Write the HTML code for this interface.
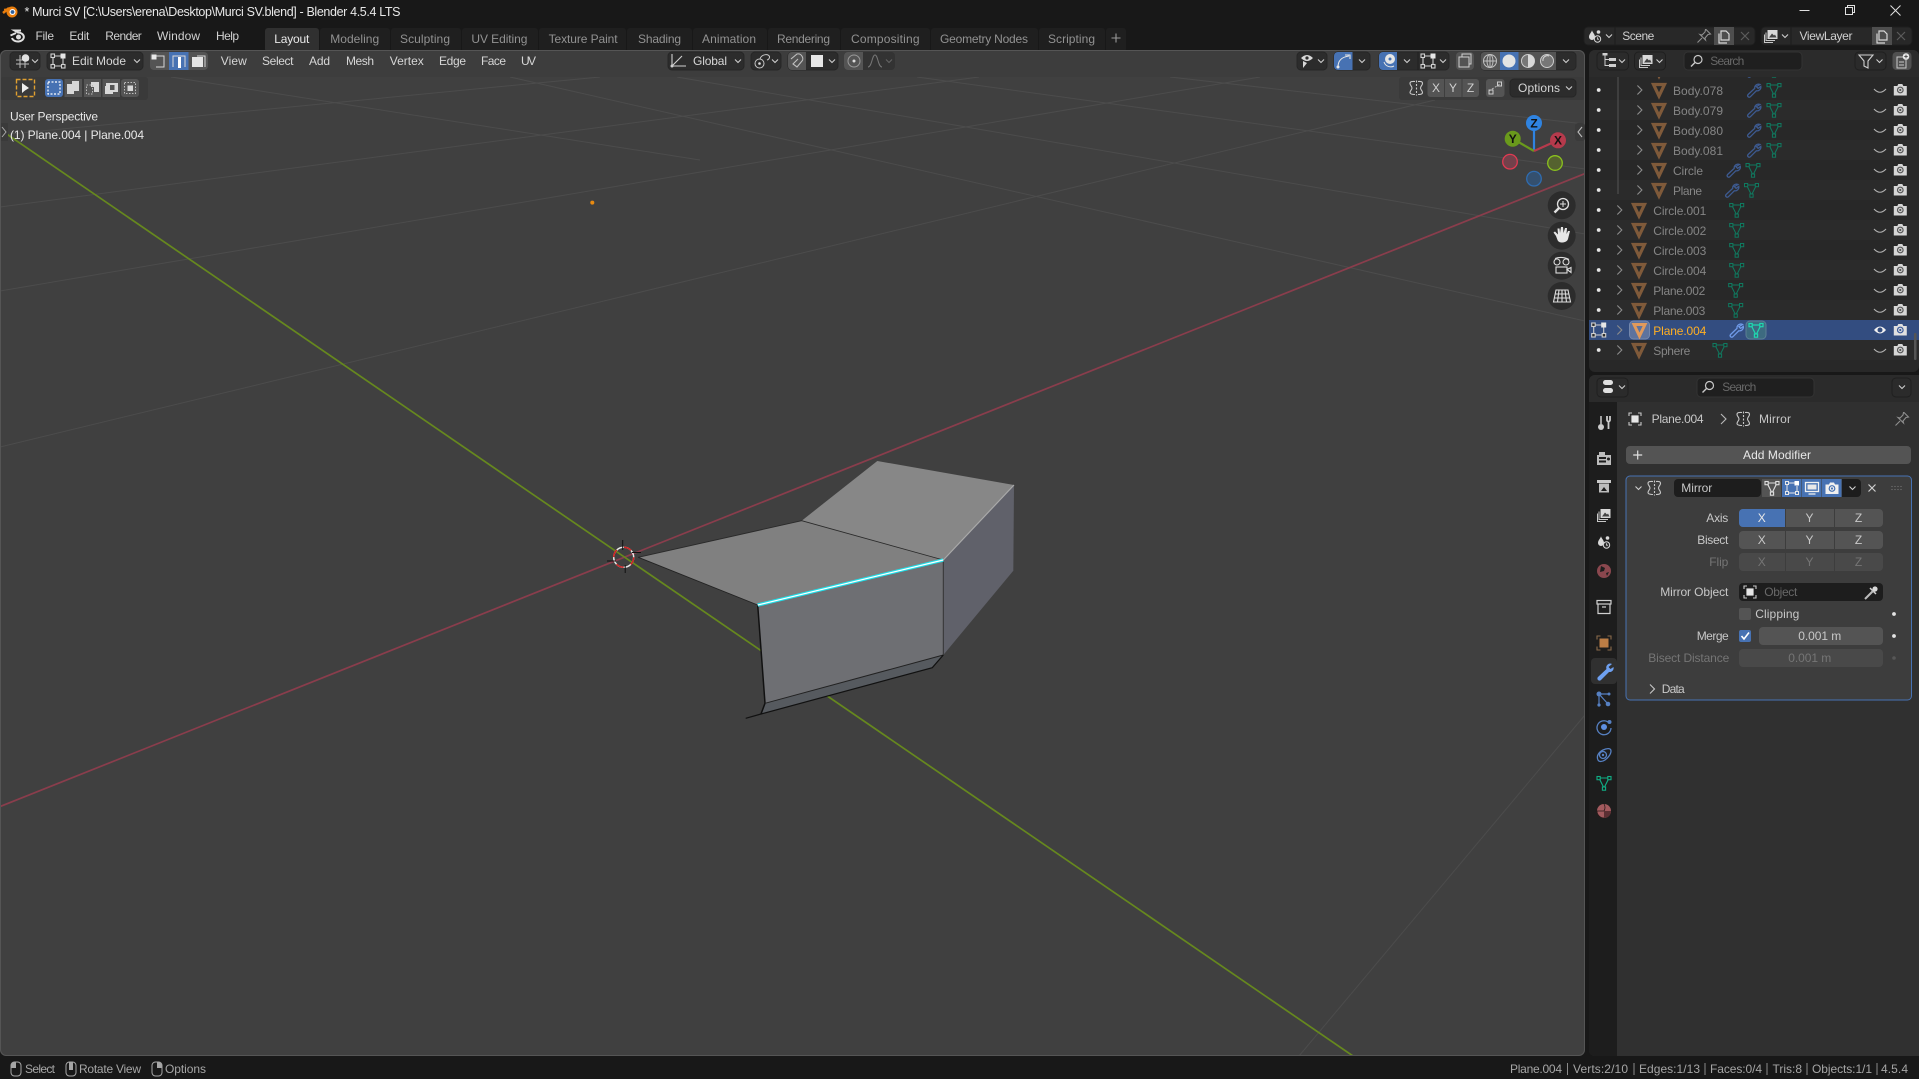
<!DOCTYPE html>
<html><head><meta charset="utf-8"><title>Blender</title>
<style>
html,body{margin:0;padding:0;background:#181818;overflow:hidden}
svg{display:block}
text{font-family:"Liberation Sans",sans-serif;font-size:12px;fill:#d0d0d0;white-space:pre}
.tab{fill:#929292}.hd{fill:#d6d6d6}.ol{fill:#858585}.lb{fill:#c8c8c8}.dim{fill:#757575}.st{fill:#a6a6a6}.ph{fill:#686868}.w{fill:#e8e8e8}
.c{text-anchor:middle}
</style></head><body>
<svg width="1919" height="1079" viewBox="0 0 1919 1079" xmlns="http://www.w3.org/2000/svg">
<defs>
<clipPath id="vp"><rect x="0" y="50" width="1585" height="1006" rx="6"/></clipPath>
<clipPath id="ol"><rect x="1589" y="50" width="330" height="322" rx="6"/></clipPath>
<g id="tri"><path d="M-5.5-5.5H5.5L0 6Z" fill="none" stroke="#7f5a3a" stroke-width="3.200" stroke-linejoin="miter"/></g>
<g id="msh" fill="none" stroke="#0f7a60" stroke-width="1"><path d="M-5-5H5L0 5Z"/><rect x="-7" y="-6.500" width="3.200" height="3.200" fill="#282828"/><rect x="3.800" y="-6.500" width="3.200" height="3.200" fill="#282828"/><rect x="-1.600" y="4" width="3.200" height="3.200" fill="#282828"/></g>
<g id="wr"><path d="M6.500-5.500A3.800 3.800 0 0 0 1.200-1.600L-5.500 4.600A1.600 1.600 0 0 0-3.200 6.800L2.800.8A3.800 3.800 0 0 0 7.300-3.600L4.600-1.600 2.900-3.400Z" fill="none" stroke="#3d5a90" stroke-width="1.300"/></g>
<g id="ec"><path d="M-6-1Q0 5.500 6-1" fill="none" stroke="#b0b0b0" stroke-width="1.100"/></g>
<g id="cam"><path d="M-6.500-4H-3L-2-6H2L3-4H6.500V5.500H-6.500Z" fill="#d6d6d6"/><circle r="3.400" fill="#555"/><circle r="2.200" fill="#d6d6d6"/><circle r="1.100" fill="#555"/></g>
<g id="chd"><path d="M-3-1.500L0 1.500 3-1.500" fill="none" stroke="#cfcfcf" stroke-width="1.100"/></g>
<g id="chr"><path d="M-2-4.500L2.500 0-2 4.500" fill="none" stroke="#8c8c8c" stroke-width="1.100"/></g>
<g id="dot"><circle r="1.900" fill="#e4e4e4"/></g>
<g id="mir" fill="none" stroke="#c8c8c8" stroke-width="1.100"><path d="M-1-6.500C-3-6.500-6-7-6-4.500-6-2.500-4-2-4 0S-6 2.500-6 4.500-3 6.500-1 6.500"/><path d="M2-6.500C4-6.500 6.500-7 6.500-4.500 6.500-2.500 4.500-2 4.500 0S6.500 2.500 6.500 4.500 4 6.500 2 6.500"/><path d="M.5-7.500V7.500" stroke-dasharray="2 1.500"/></g>
<g id="mesel" fill="none" stroke="#d0d0d0" stroke-width="1.100"><path d="M-5-5H4M-5-5V5M-5 5H5M5-3V5"/><rect x="-7" y="-7" width="3.500" height="3.500" fill="#2b2b2b"/><rect x="-7" y="3.500" width="3.500" height="3.500" fill="#2b2b2b"/><rect x="3.500" y="3.500" width="3.500" height="3.500" fill="#2b2b2b"/><rect x="2.500" y="-7.500" width="5" height="5" fill="#e6e6e6" stroke="none"/></g>
<g id="objbox"><rect x="-3.600" y="-3.600" width="7.200" height="7.200" fill="#e6e6e6"/><path d="M-6-3V-6H-3M3-6H6V-3M6 3V6H3M-3 6H-6V3" fill="none" stroke="#c8c8c8" stroke-width="1.100"/></g>
<g id="search"><circle cx="1.500" cy="-1.500" r="4" fill="none" stroke="#c8c8c8" stroke-width="1.200"/><path d="M-1.500 1.500L-5.500 5.500" stroke="#c8c8c8" stroke-width="1.400"/></g>
<g id="vl"><rect x="-3.500" y="-6" width="10" height="9" fill="#d8d8d8"/><path d="M-2 1.500L1-2.500 3-.5 4-1.500 5.500 1.500Z" fill="#444"/><path d="M-5-3.500V4.500H4M-6.500-1.500V6.500H2" fill="none" stroke="#c8c8c8" stroke-width="1"/></g>
<g id="copy"><path d="M-3-5H2L5-2V4H-3Z" fill="none" stroke="#d8d8d8" stroke-width="1.200"/><path d="M-5-2.500V7H3" fill="none" stroke="#d8d8d8" stroke-width="1.200"/></g>
<g id="pin"><path d="M2-6.500L6.500-2 4-1.500 1 2 1.500 4-4-1.500-2-1 1-4 1.500-6.500ZM-2 2L-6.500 6.500" fill="none" stroke="#8f8f8f" stroke-width="1.100"/></g>
<g id="x"><path d="M-4-4L4 4M4-4L-4 4" stroke="#5c5c5c" stroke-width="1.200"/></g>
<g id="sceneic"><path d="M-3-6C-3-4-6-2-6 1A3 3 0 0 0 0 1C0-2-3-4-3-6Z" fill="#d8d8d8"/><circle cx="3.500" cy="-4" r="1.800" fill="#d8d8d8"/><circle cx="2.500" cy="3" r="3.200" fill="#2b2b2b" stroke="#d8d8d8" stroke-width="1"/><path d="M2.500 1.200V3.200H4" stroke="#d8d8d8" fill="none" stroke-width=".8"/></g>
<g id="mouse"><rect x="-5" y="-7" width="10" height="14" rx="3.500" fill="none" stroke="#a6a6a6" stroke-width="1"/></g>
</defs>

<rect width="1919" height="1079" fill="#181818"/>

<!-- title bar -->
<circle cx="12" cy="12" r="5.500" fill="#e87d0d"/><path d="M3 13L9 8" stroke="#e87d0d" stroke-width="2.500"/><path d="M4 9.500L9 9" stroke="#e87d0d" stroke-width="1.600"/><circle cx="12.500" cy="12" r="3" fill="#fff"/><circle cx="12.500" cy="12" r="1.900" fill="#2d5f9c"/>
<text x="24.500" y="16" textLength="376" class="w" style="font-size:12.500px">* Murci SV [C:\Users\erena\Desktop\Murci SV.blend] - Blender 4.5.4 LTS</text>
<path d="M1799.500 10.500H1809.500" stroke="#e0e0e0" stroke-width="1"/>
<path d="M1845.500 7.500H1852.500V14.500H1845.500ZM1847.500 7.500V5.500H1854.500V12.500H1852.500" fill="none" stroke="#e0e0e0" stroke-width="1"/>
<path d="M1890.500 5.500L1900.500 15.500M1900.500 5.500L1890.500 15.500" stroke="#e0e0e0" stroke-width="1"/>

<!-- menu -->
<g transform="translate(18,36)"><path d="M-6 2A6 4.500 0 1 0 0-3.500L-3.500-5.500H3" fill="none" stroke="#e0e0e0" stroke-width="2"/><circle cx="0.500" cy="1" r="2.500" fill="#e0e0e0"/><path d="M-7.500-.5L-2-3" stroke="#e0e0e0" stroke-width="1.800"/></g>
<text x="35.500" y="40" textLength="18.500">File</text>
<text x="69.400" y="40" textLength="20">Edit</text>
<text x="105.300" y="40" textLength="36.500">Render</text>
<text x="157" y="40" textLength="43">Window</text>
<text x="216" y="40" textLength="23">Help</text>

<!-- workspace tabs -->
<g fill="#1f1f1f">
<rect x="320" y="28" width="70" height="24" rx="3"/><rect x="391" y="28" width="70" height="24" rx="3"/><rect x="462" y="28" width="76" height="24" rx="3"/><rect x="539" y="28" width="87" height="24" rx="3"/><rect x="627" y="28" width="65" height="24" rx="3"/><rect x="693" y="28" width="74" height="24" rx="3"/><rect x="768" y="28" width="72" height="24" rx="3"/><rect x="841" y="28" width="89" height="24" rx="3"/><rect x="931" y="28" width="107" height="24" rx="3"/><rect x="1039" y="28" width="66" height="24" rx="3"/><rect x="1106" y="28" width="20" height="24" rx="3"/>
</g>
<rect x="265" y="28" width="54" height="24" rx="3" fill="#303030"/>
<text x="274.300" y="43" textLength="35" class="w">Layout</text>
<text x="330.200" y="43" textLength="49" class="tab">Modeling</text>
<text x="400" y="43" textLength="50" class="tab">Sculpting</text>
<text x="471.400" y="43" textLength="56" class="tab">UV Editing</text>
<text x="548.600" y="43" textLength="69" class="tab">Texture Paint</text>
<text x="638" y="43" textLength="43" class="tab">Shading</text>
<text x="702" y="43" textLength="54" class="tab">Animation</text>
<text x="777" y="43" textLength="53" class="tab">Rendering</text>
<text x="851" y="43" textLength="68.500" class="tab">Compositing</text>
<text x="940" y="43" textLength="88" class="tab">Geometry Nodes</text>
<text x="1048" y="43" textLength="47" class="tab">Scripting</text>
<path d="M1116 42.500V33.500M1111.500 38H1120.500" stroke="#9a9a9a" stroke-width="1.100"/>

<!-- scene / view layer -->
<rect x="1584" y="27" width="171" height="18" rx="4" fill="#282828" stroke="#1e1e1e"/>
<rect x="1761" y="27" width="151" height="18" rx="4" fill="#282828" stroke="#1e1e1e"/>
<path d="M1615 27V45M1791 27V45" stroke="#1c1c1c"/>
<use href="#sceneic" x="1595" y="36"/><use href="#chd" x="1609" y="36"/>
<text x="1622.300" y="40" textLength="32">Scene</text>
<use href="#pin" x="1704" y="36"/>
<rect x="1714" y="27" width="20" height="18" fill="#4e4e4e"/><use href="#copy" x="1724" y="36"/><use href="#x" x="1745" y="36"/>
<use href="#vl" x="1771" y="36"/><use href="#chd" x="1785" y="36"/>
<text x="1799.500" y="40" textLength="53">ViewLayer</text>
<rect x="1872" y="27" width="20" height="18" fill="#4e4e4e"/><use href="#copy" x="1882" y="36"/><use href="#x" x="1901" y="36"/>

<!-- 3D viewport -->
<g clip-path="url(#vp)">
<rect x="0" y="50" width="1585" height="1006" fill="#404040"/>
<g stroke="#4c4c4c" stroke-width="1" fill="none">
<path d="M677 77L1585 234"/><path d="M917 77L1585 169"/><path d="M1170 77L1585 124"/><path d="M510 77L1585 321"/><path d="M171 77L700 160"/>
<path d="M0 291L1260 77"/><path d="M0 207L979 77"/><path d="M0 447L1435 100"/><path d="M0 135L600 77"/>
<path d="M1299 1056L1585 715"/>
</g>
<path d="M0 806.600L1585 173.600" stroke="#8a3d4c" stroke-width="1.700"/>
<path d="M0 129.500L1353 1056" stroke="#66881e" stroke-width="1.700"/>
<!-- mesh -->
<path d="M877.300 461L1014 485L943.300 560L801.700 520.700Z" fill="#878787"/>
<path d="M801.700 520.700L943.300 560L757.700 605L638.300 557.300Z" fill="#808080"/>
<path d="M757.700 605L943.300 560V655L765 703.300Z" fill="#6e6f73"/>
<path d="M943.300 560L1014 485L1013.300 570.700L943.300 655Z" fill="#60616a"/>
<path d="M765 703.300L943.300 655L932.300 667.700L761 714Z" fill="#565a5f"/>
<g fill="none" stroke="#111" stroke-width="1">
<path d="M638.300 557.300L801.700 520.700M801.700 520.700L943.300 560" stroke="#2a2a2a" stroke-width=".9"/><path d="M638.300 557.300L757.700 605" stroke="#222" stroke-width=".9"/><path d="M757.700 605L765 703.300L761 714" stroke-width="1.500"/><path d="M765 703.300L943.300 655" stroke="#222"/><path d="M745.700 718.300L761 714L932.300 667.700L943.300 655" stroke-width="1.200"/>
<path d="M943.300 560V655" stroke="#333"/>
</g>
<path d="M943.300 560L1014 485" stroke="#a9a9a9" stroke-width="1.200"/>
<path d="M757.700 605L943.300 560" stroke="#1fe0ea" stroke-width="3.400"/>
<path d="M757.700 605L943.300 560" stroke="#fff" stroke-width="1.200"/>
<!-- cursor -->
<circle cx="623.700" cy="557.300" r="10" fill="none" stroke="#e8e8e8" stroke-width="1.500"/>
<circle cx="623.700" cy="557.300" r="10" fill="none" stroke="#d02020" stroke-width="1.500" stroke-dasharray="7.850 7.850"/>
<path d="M622.700 540V550M625.200 565V573M607 561H616M632 552.500H641" stroke="#111" stroke-width="1"/>
<circle cx="592.300" cy="202.600" r="2" fill="#e88a10"/>
<!-- header -->
<rect x="0" y="50" width="1585" height="27" fill="#3d3d3d"/>
<rect x="0" y="77" width="148" height="23" rx="3" fill="#3a3a3a"/>
<rect x="1399" y="77" width="186" height="23" rx="3" fill="#3a3a3a"/>
<text x="10" y="120.500" textLength="88" class="w">User Perspective</text>
<text x="10" y="139" textLength="134" class="w">(1) Plane.004 | Plane.004</text>
<rect x="0" y="123" width="8" height="18" fill="#3a3a3a"/><path d="M2 127L6 132 2 137" fill="none" stroke="#aaa" stroke-width="1"/>
</g>
<rect x="0.500" y="50.500" width="1584" height="1005" rx="6" fill="none" stroke="#555" stroke-width="1"/>

<!-- header widgets -->
<rect x="10" y="52" width="30" height="18" rx="4" fill="#2c2c2c" stroke="#262626"/>
<g transform="translate(23,61)"><path d="M-7 3H6M-7-1H6M-3-6V7M2-6V7" stroke="#bbb" stroke-width="1" fill="none"/><circle cx="2.500" cy="-3" r="3.800" fill="#e0e0e0"/></g><use href="#chd" x="35" y="61"/>
<rect x="47" y="52" width="96" height="18" rx="4" fill="#2c2c2c" stroke="#262626"/>
<use href="#mesel" x="58" y="61"/>
<text x="72" y="65" textLength="54" class="hd">Edit Mode</text><use href="#chd" x="137" y="61"/>
<rect x="150" y="52" width="58" height="18" rx="4" fill="#545454"/>
<rect x="169" y="52" width="19.500" height="18" fill="#4772b3"/>
<g fill="none" stroke="#d8d8d8" stroke-width="1"><path d="M154 56H164V67H156"/><path d="M173 67V56H185V67"/><path d="M197 56H205V67"/></g>
<rect x="151.500" y="54.500" width="5" height="5" fill="#e8e8e8"/><rect x="178" y="57" width="3" height="11" fill="#fff"/><rect x="192" y="57" width="11" height="10" fill="#e6e6e6"/>
<text x="220.800" y="65" textLength="26" class="hd">View</text>
<text x="262" y="65" textLength="31.500" class="hd">Select</text>
<text x="309" y="65" textLength="21" class="hd">Add</text>
<text x="346" y="65" textLength="28" class="hd">Mesh</text>
<text x="389.800" y="65" textLength="34" class="hd">Vertex</text>
<text x="439" y="65" textLength="27" class="hd">Edge</text>
<text x="481" y="65" textLength="25" class="hd">Face</text>
<text x="521" y="65" textLength="15" class="hd">UV</text>

<rect x="16.500" y="79.500" width="18" height="17" fill="none" stroke="#e0a030" stroke-width="1.400" stroke-dasharray="4 2"/>
<path d="M22 83V93L25 90.500 29 88Z" fill="#eee"/>
<g fill="#545454"><rect x="64.500" y="79" width="17.500" height="18"/><rect x="84" y="79" width="17" height="18"/><rect x="102.500" y="79" width="17.500" height="18"/><rect x="121" y="79" width="18" height="18" rx="3"/></g>
<rect x="45" y="79" width="18" height="18" rx="3" fill="#4772b3"/>
<rect x="48" y="82" width="12" height="12" fill="none" stroke="#fff" stroke-width="1.200" stroke-dasharray="2 1.500"/>
<path d="M67 84H72V81H79V91H74V94H67Z" fill="#d8d8d8"/>
<path d="M91 82H99V92H94V87H91Z" fill="#d8d8d8"/><rect x="86.500" y="85" width="6" height="9" fill="none" stroke="#bbb" stroke-dasharray="1.500 1.500"/>
<path d="M106 83H118V92H113V94H105V86H106Z" fill="#d8d8d8"/><rect x="110" y="85" width="4.500" height="5" fill="#545454"/>
<rect x="124.500" y="82.500" width="11" height="11" fill="none" stroke="#c0c0c0" stroke-dasharray="1.500 1.500"/><rect x="127.500" y="85.500" width="5.500" height="5.500" fill="#d8d8d8"/>

<!-- transform widgets -->
<rect x="668" y="52" width="76" height="18" rx="4" fill="#2c2c2c" stroke="#262626"/>
<path d="M672 54V66H686M672 66L682 56" fill="none" stroke="#d0d0d0" stroke-width="1.100"/><circle cx="672" cy="66" r="1.500" fill="#d0d0d0"/>
<text x="693" y="65" textLength="34" class="hd">Global</text><use href="#chd" x="738" y="61"/>
<rect x="751" y="52" width="30" height="18" rx="4" fill="#2c2c2c" stroke="#262626"/>
<g fill="none" stroke="#c8c8c8" stroke-width="1"><circle cx="759.500" cy="63.500" r="4.500"/><path d="M760 59C761 54 770 53 769.500 57.500 769 59.500 767 60 767 60"/></g><circle cx="759.500" cy="63.500" r="1.300" fill="#e0e0e0"/><use href="#chd" x="775" y="61"/>
<rect x="788" y="52" width="50" height="18" rx="4" fill="#2c2c2c" stroke="#262626"/>
<path d="M788 56a4 4 0 0 1 4-4H806V70H792a4 4 0 0 1-4-4Z" fill="#545454"/>
<path d="M791 59L797 54C802 53 804 59 802 61L797 67 793 64 798 59" fill="none" stroke="#c0c0c0" stroke-width="1.100"/>
<rect x="811" y="55" width="12" height="12" fill="#e6e6e6"/><use href="#chd" x="832" y="61"/>
<rect x="844" y="52" width="51" height="18" rx="4" fill="#333"/>
<path d="M844 56a4 4 0 0 1 4-4H863V70H848a4 4 0 0 1-4-4Z" fill="#545454"/>
<circle cx="854" cy="61" r="6" fill="none" stroke="#9a9a9a"/><circle cx="854" cy="61" r="1.500" fill="#ddd"/>
<path d="M868 67C872 67 872 55 875 55S878 67 882 67" fill="none" stroke="#777" stroke-width="1"/>
<path d="M886 59.500L889 62.500 892 59.500" fill="none" stroke="#666" stroke-width="1"/>

<!-- right header widgets -->
<rect x="1297" y="52" width="30" height="18" rx="4" fill="#2c2c2c" stroke="#262626"/>
<path d="M1301 58Q1307 52 1313 58 1307 64 1301 58ZM1303 61L1303 68 1307 63" fill="#d8d8d8"/><circle cx="1307" cy="58" r="1.600" fill="#2c2c2c"/><use href="#chd" x="1321" y="61"/>
<rect x="1334" y="52" width="36" height="18" rx="4" fill="#2c2c2c" stroke="#262626"/>
<path d="M1334 56a4 4 0 0 1 4-4H1352.500V70H1338a4 4 0 0 1-4-4Z" fill="#4772b3"/>
<path d="M1338 67C1338 60 1342 57 1349 56M1345 55H1350V59" fill="none" stroke="#e6e6e6" stroke-width="1.100"/><circle cx="1338" cy="67" r="1.500" fill="#e6e6e6"/><use href="#chd" x="1362" y="61"/>
<rect x="1379" y="52" width="70" height="18" rx="4" fill="#2c2c2c" stroke="#262626"/>
<path d="M1379 56a4 4 0 0 1 4-4H1397V70H1383a4 4 0 0 1-4-4Z" fill="#4772b3"/>
<circle cx="1390" cy="59" r="5" fill="#e6e6e6"/><path d="M1384 62A7 7 0 0 0 1394 66" fill="none" stroke="#e6e6e6"/><circle cx="1390" cy="59" r="1.500" fill="#4772b3"/><use href="#chd" x="1407" y="61"/>
<path d="M1418 52V70" stroke="#1f1f1f"/><use href="#mesel" x="1428" y="61"/><use href="#chd" x="1443" y="61"/>
<rect x="1456" y="52" width="18" height="18" rx="4" fill="#545454"/>
<path d="M1459 57H1469V67H1459ZM1462 57V54H1471V64H1469" fill="none" stroke="#d0d0d0" stroke-width="1"/>
<rect x="1480.500" y="52" width="95.500" height="18" rx="4" fill="#2c2c2c" stroke="#262626"/>
<path d="M1480.500 56a4 4 0 0 1 4-4H1556V70H1484.500a4 4 0 0 1-4-4Z" fill="#545454"/>
<rect x="1500" y="52" width="18.500" height="18" fill="#4772b3"/>
<g fill="none" stroke="#c0c0c0"><circle cx="1490" cy="61" r="6.500"/><path d="M1483.500 61H1496.500M1490 54.500V67.500"/><ellipse cx="1490" cy="61" rx="3" ry="6.500"/></g>
<circle cx="1509" cy="61" r="6.500" fill="#e4e4e4"/>
<circle cx="1528" cy="61" r="6.500" fill="#777" stroke="#ccc"/><path d="M1528 54.500A6.500 6.500 0 0 1 1528 67.500Z" fill="#d8d8d8"/>
<circle cx="1547" cy="61" r="6.500" fill="#777" stroke="#ccc"/><path d="M1543 61A4.500 4.500 0 0 1 1549 56" fill="none" stroke="#ddd"/>
<use href="#chd" x="1566" y="61"/>

<use href="#mir" x="1416" y="88"/>
<rect x="1427.500" y="79" width="51.500" height="18" rx="3" fill="#545454"/>
<path d="M1444.500 79V97M1462 79V97" stroke="#3e3e3e"/>
<text x="1436" y="92" class="c">X</text><text x="1453" y="92" class="c">Y</text><text x="1470.500" y="92" class="c">Z</text>
<rect x="1486" y="79" width="18.500" height="18" rx="3" fill="#545454"/>
<path d="M1489 91L1500 84" stroke="#bbb" stroke-dasharray="2 1.500"/><rect x="1489" y="90" width="4" height="4" fill="none" stroke="#ccc"/><rect x="1497.500" y="82" width="4" height="4" fill="none" stroke="#ccc"/>
<rect x="1510" y="79" width="66" height="18" rx="4" fill="#2c2c2c" stroke="#262626"/>
<text x="1518" y="92" textLength="42" class="hd">Options</text><use href="#chd" x="1569" y="88"/>

<!-- gizmo -->
<g stroke-width="2.200"><path d="M1534 151L1534 123" stroke="#2f83e0"/><path d="M1534 151L1512.700 138.700" stroke="#6a9a1c"/><path d="M1534 151L1558 140.300" stroke="#b63a4c"/></g>
<circle cx="1534" cy="123" r="8" fill="#2f83e0"/><circle cx="1512.700" cy="138.700" r="8" fill="#6a9a1c"/><circle cx="1558" cy="140.300" r="8" fill="#b63a4c"/>
<text x="1534" y="127.500" class="c" style="fill:#111;font-weight:bold;font-size:12px">Z</text>
<text x="1512.700" y="143" class="c" style="fill:#111;font-weight:bold;font-size:12px">Y</text>
<text x="1558" y="144.500" class="c" style="fill:#111;font-weight:bold;font-size:12px">X</text>
<circle cx="1510" cy="161.700" r="7.300" fill="#73414b" stroke="#e23a52" stroke-width="1.300"/>
<circle cx="1555" cy="163" r="7.300" fill="#55622f" stroke="#8bc21e" stroke-width="1.300"/>
<circle cx="1534" cy="178.700" r="7.300" fill="#34506f" stroke="#2f6cb0" stroke-width="1.300"/>
<rect x="1575" y="123" width="10" height="18" rx="3" fill="#3a3a3a"/><path d="M1582 127L1578 132 1582 137" fill="none" stroke="#bbb" stroke-width="1.100"/>
<g fill="#2c2c2c"><circle cx="1561.700" cy="205.300" r="14"/><circle cx="1561.700" cy="235.700" r="14"/><circle cx="1561.700" cy="265.700" r="14"/><circle cx="1561.700" cy="296" r="14"/></g>
<circle cx="1563" cy="204" r="5.500" fill="none" stroke="#e0e0e0" stroke-width="1.300"/><path d="M1559 208L1554.500 212.500" stroke="#e0e0e0" stroke-width="2.400"/><path d="M1560 204H1566M1563 201V207" stroke="#e0e0e0" stroke-width="1"/>
<path d="M1556 236L1553.500 232.500 1555 231.500 1558 234.500 1557.500 228.500H1559.500L1560 233 1561 227H1563L1563.500 233 1565 228H1567L1566.500 234 1568 231H1570L1568 239C1567 243 1559 244 1557.500 240Z" fill="#e6e6e6"/>
<g fill="none" stroke="#ddd" stroke-width="1.100"><circle cx="1557" cy="262" r="3"/><circle cx="1566" cy="262" r="3"/><path d="M1555 258.500Q1562 256 1569 259.500"/><rect x="1556" y="267" width="11" height="6"/><path d="M1567 269.500L1571 267.500V272.500Z"/></g>
<g fill="none" stroke="#ddd" stroke-width="1.100"><path d="M1556 290H1568L1570.500 302H1553.500ZM1562 290V302M1559 290L1557.500 302M1565 290L1566.500 302M1555 294H1569M1554.500 298H1570"/></g>

<!-- OUTLINER -->
<g clip-path="url(#ol)">
<rect x="1589" y="50" width="330" height="322" fill="#282828"/>
<g fill="#2b2b2b"><rect x="1589" y="100" width="330" height="20"/><rect x="1589" y="140" width="330" height="20"/><rect x="1589" y="180" width="330" height="20"/><rect x="1589" y="220" width="330" height="20"/><rect x="1589" y="260" width="330" height="20"/><rect x="1589" y="300" width="330" height="20"/><rect x="1589" y="340" width="330" height="20"/></g>
<rect x="1589" y="320" width="330" height="20" fill="#334d80"/>
<path d="M1618 75V194" stroke="#555"/>
<use href="#tri" x="1659" y="70"/><use href="#wr" x="1753.500" y="70"/><use href="#msh" x="1774" y="70"/>
<rect x="1589" y="50" width="330" height="27" fill="#2b2b2b"/>

<use href="#dot" x="1598.700" y="90"/><use href="#chr" x="1639.400" y="90"/><use href="#tri" x="1659" y="90"/><text x="1673" y="95" textLength="50" class="ol">Body.078</text><use href="#wr" x="1753.500" y="90"/><use href="#msh" x="1774" y="90"/><use href="#ec" x="1880" y="90"/><use href="#cam" x="1900.300" y="90"/>
<use href="#dot" x="1598.700" y="110"/><use href="#chr" x="1639.400" y="110"/><use href="#tri" x="1659" y="110"/><text x="1673" y="115" textLength="50" class="ol">Body.079</text><use href="#wr" x="1753.500" y="110"/><use href="#msh" x="1774" y="110"/><use href="#ec" x="1880" y="110"/><use href="#cam" x="1900.300" y="110"/>
<use href="#dot" x="1598.700" y="130"/><use href="#chr" x="1639.400" y="130"/><use href="#tri" x="1659" y="130"/><text x="1673" y="135" textLength="50" class="ol">Body.080</text><use href="#wr" x="1753.500" y="130"/><use href="#msh" x="1774" y="130"/><use href="#ec" x="1880" y="130"/><use href="#cam" x="1900.300" y="130"/>
<use href="#dot" x="1598.700" y="150"/><use href="#chr" x="1639.400" y="150"/><use href="#tri" x="1659" y="150"/><text x="1673" y="155" textLength="50" class="ol">Body.081</text><use href="#wr" x="1753.500" y="150"/><use href="#msh" x="1774" y="150"/><use href="#ec" x="1880" y="150"/><use href="#cam" x="1900.300" y="150"/>
<use href="#dot" x="1598.700" y="170"/><use href="#chr" x="1639.400" y="170"/><use href="#tri" x="1659" y="170"/><text x="1673" y="175" textLength="30" class="ol">Circle</text><use href="#wr" x="1733" y="170"/><use href="#msh" x="1753" y="170"/><use href="#ec" x="1880" y="170"/><use href="#cam" x="1900.300" y="170"/>
<use href="#dot" x="1598.700" y="190"/><use href="#chr" x="1639.400" y="190"/><use href="#tri" x="1659" y="190"/><text x="1673" y="195" textLength="29" class="ol">Plane</text><use href="#wr" x="1731.500" y="190"/><use href="#msh" x="1751.500" y="190"/><use href="#ec" x="1880" y="190"/><use href="#cam" x="1900.300" y="190"/>

<use href="#dot" x="1598.700" y="210"/><use href="#chr" x="1619.300" y="210"/><use href="#tri" x="1639" y="210"/><text x="1653.300" y="215" textLength="53" class="ol">Circle.001</text><use href="#msh" x="1736.700" y="210"/><use href="#ec" x="1880" y="210"/><use href="#cam" x="1900.300" y="210"/>
<use href="#dot" x="1598.700" y="230"/><use href="#chr" x="1619.300" y="230"/><use href="#tri" x="1639" y="230"/><text x="1653.300" y="235" textLength="53" class="ol">Circle.002</text><use href="#msh" x="1736.700" y="230"/><use href="#ec" x="1880" y="230"/><use href="#cam" x="1900.300" y="230"/>
<use href="#dot" x="1598.700" y="250"/><use href="#chr" x="1619.300" y="250"/><use href="#tri" x="1639" y="250"/><text x="1653.300" y="255" textLength="53" class="ol">Circle.003</text><use href="#msh" x="1736.700" y="250"/><use href="#ec" x="1880" y="250"/><use href="#cam" x="1900.300" y="250"/>
<use href="#dot" x="1598.700" y="270"/><use href="#chr" x="1619.300" y="270"/><use href="#tri" x="1639" y="270"/><text x="1653.300" y="275" textLength="53" class="ol">Circle.004</text><use href="#msh" x="1736.700" y="270"/><use href="#ec" x="1880" y="270"/><use href="#cam" x="1900.300" y="270"/>
<use href="#dot" x="1598.700" y="290"/><use href="#chr" x="1619.300" y="290"/><use href="#tri" x="1639" y="290"/><text x="1653.300" y="295" textLength="52" class="ol">Plane.002</text><use href="#msh" x="1735.700" y="290"/><use href="#ec" x="1880" y="290"/><use href="#cam" x="1900.300" y="290"/>
<use href="#dot" x="1598.700" y="310"/><use href="#chr" x="1619.300" y="310"/><use href="#tri" x="1639" y="310"/><text x="1653.300" y="315" textLength="52" class="ol">Plane.003</text><use href="#msh" x="1735.700" y="310"/><use href="#ec" x="1880" y="310"/><use href="#cam" x="1900.300" y="310"/>

<!-- active row -->
<use href="#mesel" x="1598.700" y="330"/>
<use href="#chr" x="1619.300" y="330"/>
<rect x="1629.500" y="321" width="20" height="18" rx="4" fill="#5d739e" stroke="#7488ad"/>
<path d="M1634 324.500H1645L1639.500 336Z" fill="none" stroke="#e09a5c" stroke-width="3"/>
<text x="1653.300" y="335" textLength="53" style="fill:#ffaf23">Plane.004</text>
<path d="M1742.500 324.500A3.800 3.800 0 0 0 1737 328.400L1730.500 334.600A1.600 1.600 0 0 0 1732.800 336.800L1738.800 330.800A3.800 3.800 0 0 0 1743.300 326.400L1740.600 328.400 1738.900 326.600Z" fill="none" stroke="#6f9ae8" stroke-width="1.300"/>
<rect x="1746" y="321" width="20" height="18" rx="4" fill="#3d6a80" stroke="#5b7f95"/>
<g transform="translate(1756,330)" fill="none" stroke="#1fd8b0" stroke-width="1.200"><path d="M-5-5H5L0 5Z"/><rect x="-7" y="-6.500" width="3.200" height="3.200" fill="#3d6a80"/><rect x="3.800" y="-6.500" width="3.200" height="3.200" fill="#3d6a80"/><rect x="-1.600" y="4" width="3.200" height="3.200" fill="#3d6a80"/></g>
<path d="M1874 330Q1880 323 1886 330 1880 337 1874 330Z" fill="#f0f0f0"/><circle cx="1880" cy="330" r="2.500" fill="#334d80"/>
<g transform="translate(1900.300,330)"><path d="M-6.500-4H-3L-2-6H2L3-4H6.500V5.500H-6.500Z" fill="#e0e0e0"/><circle r="3.400" fill="#3a5a9a"/><circle r="2.200" fill="#e0e0e0"/><circle r="1.100" fill="#3a5a9a"/></g>

<use href="#dot" x="1598.700" y="350"/><use href="#chr" x="1619.300" y="350"/><use href="#tri" x="1639" y="350"/><text x="1653.300" y="355" textLength="37" class="ol">Sphere</text><use href="#msh" x="1720" y="350"/><use href="#ec" x="1880" y="350"/><use href="#cam" x="1900.300" y="350"/>
<rect x="1914" y="333" width="2.500" height="27" rx="1" fill="#555"/>

<!-- outliner header -->
<rect x="1597" y="52" width="31.500" height="18" rx="4" fill="#2b2b2b" stroke="#1f1f1f"/>
<path d="M1605 54V66M1605 59.500H1609M1605 65.500H1609" stroke="#cfcfcf" fill="none"/><rect x="1602.500" y="53" width="5" height="2.500" fill="#cfcfcf"/><rect x="1609" y="58" width="7" height="3" fill="#cfcfcf"/><rect x="1609" y="64" width="7" height="3" fill="#cfcfcf"/><use href="#chd" x="1622" y="61"/>
<rect x="1634.500" y="52" width="31" height="18" rx="4" fill="#2b2b2b" stroke="#1f1f1f"/>
<use href="#vl" x="1646" y="61"/><use href="#chd" x="1659.500" y="61"/>
<rect x="1684" y="52" width="118" height="18" rx="4" fill="#1f1f1f" stroke="#333"/>
<use href="#search" x="1696.500" y="61"/>
<text x="1710.300" y="65" textLength="34" class="ph">Search</text>
<rect x="1855" y="52" width="31" height="18" rx="4" fill="#2b2b2b" stroke="#1f1f1f"/>
<path d="M1859 55H1873L1868 61V68L1864 66V61Z" fill="none" stroke="#d0d0d0" stroke-width="1.100"/><use href="#chd" x="1879.500" y="61"/>
<rect x="1892.500" y="52" width="19" height="18" rx="4" fill="#505050"/>
<path d="M1897 57H1906V68H1897Z" fill="none" stroke="#c8c8c8"/><path d="M1899 62H1904M1899 65H1904" stroke="#c8c8c8"/><circle cx="1906" cy="56.500" r="3.300" fill="#e6e6e6"/><path d="M1904.300 56.500H1907.700M1906 54.800V58.200" stroke="#505050"/>
</g>

<!-- PROPERTIES -->
<path d="M1595 375H1919V1056H1595A6 6 0 0 1 1589 1050V381A6 6 0 0 1 1595 375Z" fill="#303030"/>
<path d="M1595 375H1919V402H1589V381A6 6 0 0 1 1595 375Z" fill="#2b2b2b"/>
<path d="M1589 402H1617V1056H1595A6 6 0 0 1 1589 1050Z" fill="#1d1d1d"/>
<rect x="1597" y="378" width="31" height="19" rx="4" fill="#2b2b2b" stroke="#1f1f1f"/>
<rect x="1603" y="380" width="10" height="5" rx="2.500" fill="#e0e0e0"/><rect x="1603" y="388" width="10" height="5" rx="2.500" fill="#e0e0e0"/><use href="#chd" x="1622" y="387"/>
<rect x="1697" y="378" width="117" height="19" rx="4" fill="#1f1f1f" stroke="#333"/>
<use href="#search" x="1708" y="387"/>
<text x="1722.300" y="391" textLength="34" class="ph">Search</text>
<rect x="1892" y="378" width="19" height="19" rx="4" fill="#2b2b2b" stroke="#1f1f1f"/><use href="#chd" x="1902" y="387"/>

<!-- tabs column -->
<rect x="1591" y="658" width="26" height="26" rx="4" fill="#303030"/>
<g transform="translate(1604,423)"><path d="M3-7V-3C3-1 6-1 6-3V-7M4.500-2V6" stroke="#ccc" stroke-width="1.800" fill="none"/><path d="M-3-7V1" stroke="#ccc" stroke-width="1.500"/><circle cx="-3" cy="4" r="3" fill="#ccc"/></g>
<g transform="translate(1604,459)"><path d="M-7-4H7V6H-7Z" fill="#bcbcbc"/><rect x="-5" y="-7" width="6" height="3" fill="#bcbcbc"/><rect x="-5" y="-2" width="7" height="2" fill="#1d1d1d"/><rect x="-5" y="1.500" width="7" height="2" fill="#1d1d1d"/><circle cx="4.500" cy="0" r="1.500" fill="#1d1d1d"/></g>
<g transform="translate(1604,486)"><rect x="-7" y="-6" width="14" height="3" fill="#c8c8c8"/><rect x="-5" y="-2.500" width="10" height="9" fill="#bcbcbc"/><path d="M-3 5L0 1 3 5Z" fill="#1d1d1d"/></g>
<g transform="translate(1604,515)"><use href="#vl"/></g>
<g transform="translate(1604,542)"><use href="#sceneic"/></g>
<g transform="translate(1604,571)"><circle r="7" fill="#8a474e"/><path d="M-3-5L1-3 0 0-4 1ZM2 2L5 1 3 5Z" fill="#1d1d1d"/></g>
<g transform="translate(1604,607)"><rect x="-7" y="-6.500" width="14" height="3.500" fill="none" stroke="#d0d0d0" stroke-width="1.200"/><path d="M-6-3V6.500H6V-3M-2 0H2" fill="none" stroke="#d0d0d0" stroke-width="1.200"/></g>
<g transform="translate(1604,643)"><rect x="-4.500" y="-4.500" width="9" height="9" fill="#bb7d45"/><path d="M-7-3.500V-7H-3.500M3.500-7H7V-3.500M7 3.500V7H3.500M-3.500 7H-7V3.500" fill="none" stroke="#8a6a4a" stroke-width="1.100"/></g>
<path d="M1612 664A4 4 0 0 0 1606.500 669L1598 677A2.100 2.100 0 0 0 1601 680L1609 672A4 4 0 0 0 1613.500 667L1610.500 669 1608.500 667Z" fill="#6ea0f0"/>
<g transform="translate(1604,699)"><path d="M-5-5L4-5M-5-5L4 5M-5-5V5" stroke="#5680c2" stroke-width="1.200"/><circle cx="-5" cy="-5" r="2.500" fill="#5680c2"/><circle cx="4" cy="5" r="2.300" fill="#5680c2"/><circle cx="-5" cy="6" r="1.600" fill="#5680c2"/><circle cx="5" cy="-5" r="1.500" fill="#5680c2"/></g>
<g transform="translate(1604,727)"><circle cy="0" r="3" fill="#5e8fe0"/><path d="M4-5A7 7 0 1 0 7 1" fill="none" stroke="#5680c2" stroke-width="1.300"/><circle cx="5.500" cy="-5" r="2" fill="#5680c2"/></g>
<g transform="translate(1604,755)"><path d="M-6 5C-8 1-5-3-1-5 3-7 7-7 7-4 7-1 4 3 1 5-2 7-5 7-6 5Z" fill="none" stroke="#5680c2" stroke-width="1.300"/><circle cx="-1" cy="0" r="3.500" fill="none" stroke="#5680c2" stroke-width="1.300"/><circle cx="-1" cy="0" r="1.200" fill="#5680c2"/></g>
<g transform="translate(1604,783)" fill="none" stroke="#10ad84" stroke-width="1.100"><path d="M-5-5H5L0 5Z"/><rect x="-7" y="-6.500" width="3.200" height="3.200" fill="#1d1d1d"/><rect x="3.800" y="-6.500" width="3.200" height="3.200" fill="#1d1d1d"/><rect x="-1.600" y="4" width="3.200" height="3.200" fill="#1d1d1d"/></g>
<g transform="translate(1604,811)"><circle r="7" fill="#a35a5e"/><path d="M0-7A7 7 0 0 1 0 0L-7 0A7 7 0 0 0 0 7" fill="none" stroke="#2a1a1a" stroke-width=".8"/><path d="M0 0H7A7 7 0 0 1 0 7Z" fill="#5c2f33"/></g>

<!-- breadcrumb -->
<use href="#objbox" x="1635" y="419"/>
<text x="1651.600" y="423" textLength="52" class="lb">Plane.004</text>
<path d="M1721 414L1726 419 1721 424" fill="none" stroke="#b8b8b8" stroke-width="1.100"/>
<use href="#mir" x="1743" y="419"/>
<text x="1759" y="423" textLength="32" class="lb">Mirror</text>
<use href="#pin" x="1902" y="419"/>
<rect x="1626" y="446" width="285" height="18" rx="4" fill="#545454"/>
<path d="M1637.700 450.500V459.500M1633.200 455H1642.200" stroke="#e0e0e0" stroke-width="1.200"/>
<text x="1743" y="459" textLength="68" class="w">Add Modifier</text>

<!-- modifier panel -->
<rect x="1626" y="476" width="285.500" height="224" rx="4" fill="#3d3d3d" stroke="#4772b3" stroke-width="1"/>
<use href="#chd" x="1638.500" y="488"/>
<use href="#mir" x="1654" y="488"/>
<rect x="1674" y="479" width="87" height="18" rx="4" fill="#1d1d1d"/>
<text x="1681.300" y="492" textLength="31" class="lb">Mirror</text>
<rect x="1762" y="479" width="19" height="18" fill="#545454"/>
<g transform="translate(1772,488)" fill="none" stroke="#e0e0e0" stroke-width="1.100"><path d="M-5-5H5L0 5Z"/><rect x="-7" y="-6.500" width="3.200" height="3.200" fill="#545454"/><rect x="3.800" y="-6.500" width="3.200" height="3.200" fill="#545454"/><rect x="-1.600" y="4" width="3.200" height="3.200" fill="#545454"/></g>
<rect x="1782" y="479" width="19.500" height="18" fill="#4772b3"/><rect x="1802" y="479" width="19.500" height="18" fill="#4772b3"/><rect x="1822" y="479" width="19.500" height="18" fill="#4772b3"/>
<path d="M1842 479H1857a4 4 0 0 1 4 4V493a4 4 0 0 1-4 4H1842Z" fill="#1d1d1d"/>
<g transform="translate(1792,488)" fill="none" stroke="#e8e8e8" stroke-width="1"><path d="M-5-5H3M-5-5V5M-5 5H5M5-2V5"/><rect x="-6.500" y="-6.500" width="3" height="3" fill="#4772b3"/><rect x="-6.500" y="3.500" width="3" height="3" fill="#4772b3"/><rect x="3.500" y="3.500" width="3" height="3" fill="#4772b3"/><rect x="2.500" y="-7" width="4.500" height="4.500" fill="#fff" stroke="none"/></g>
<g transform="translate(1812,488)"><rect x="-6.500" y="-5.500" width="13" height="9" fill="none" stroke="#f0f0f0" stroke-width="1.300"/><rect x="-4.500" y="-3.500" width="9" height="5" fill="#e8e8e8"/><path d="M-3.500 6H3.500" stroke="#f0f0f0" stroke-width="1.300"/></g>
<g transform="translate(1832,488.500)"><path d="M-6.500-4H-3L-2-6H2L3-4H6.500V5.500H-6.500Z" fill="#f0f0f0"/><circle r="3.400" fill="#4772b3"/><circle r="2.200" fill="#f0f0f0"/><circle r="1.100" fill="#4772b3"/></g>
<use href="#chd" x="1852.500" y="488"/>
<path d="M1868.500 484.500L1875.500 491.500M1875.500 484.500L1868.500 491.500" stroke="#d0d0d0" stroke-width="1.200"/>
<g fill="#7a7a7a"><circle cx="1892" cy="486.500" r=".6"/><circle cx="1895" cy="486.500" r=".6"/><circle cx="1898" cy="486.500" r=".6"/><circle cx="1901" cy="486.500" r=".6"/><circle cx="1892" cy="489.500" r=".6"/><circle cx="1895" cy="489.500" r=".6"/><circle cx="1898" cy="489.500" r=".6"/><circle cx="1901" cy="489.500" r=".6"/></g>

<text x="1706.300" y="522" textLength="22" class="lb">Axis</text>
<rect x="1739" y="509" width="144" height="18" rx="4" fill="#545454"/>
<path d="M1739 513a4 4 0 0 1 4-4H1785V527H1743a4 4 0 0 1-4-4Z" fill="#4772b3"/>
<path d="M1785.500 509V527M1834.500 509V527" stroke="#3d3d3d"/>
<text x="1761.700" y="522" class="c w">X</text><text x="1809.500" y="522" class="c lb">Y</text><text x="1858.500" y="522" class="c lb">Z</text>

<text x="1697.300" y="544" textLength="31" class="lb">Bisect</text>
<rect x="1739" y="531" width="144" height="18" rx="4" fill="#545454"/>
<path d="M1785.500 531V549M1834.500 531V549" stroke="#3d3d3d"/>
<text x="1761.700" y="544" class="c lb">X</text><text x="1809.500" y="544" class="c lb">Y</text><text x="1858.500" y="544" class="c lb">Z</text>

<text x="1709.300" y="566" textLength="19" class="dim">Flip</text>
<rect x="1739" y="553" width="144" height="18" rx="4" fill="#494949"/>
<path d="M1785.500 553V571M1834.500 553V571" stroke="#3d3d3d"/>
<text x="1761.700" y="566" class="c dim">X</text><text x="1809.500" y="566" class="c dim">Y</text><text x="1858.500" y="566" class="c dim">Z</text>

<text x="1660.300" y="596" textLength="68" class="lb">Mirror Object</text>
<rect x="1739" y="583" width="144" height="18" rx="4" fill="#1d1d1d"/>
<use href="#objbox" x="1750" y="592"/>
<text x="1764.300" y="596" textLength="33" class="ph">Object</text>
<path d="M1866 598L1872 592M1870 588L1876 594" stroke="#d0d0d0" stroke-width="1.500"/><path d="M1865 599L1873 591" stroke="#bbb" stroke-width="2"/><circle cx="1875" cy="589" r="2.600" fill="#d8d8d8"/>

<rect x="1739" y="608" width="12" height="12" rx="2" fill="#545454"/>
<text x="1755.300" y="618" textLength="44" class="lb">Clipping</text>
<use href="#dot" x="1894" y="614"/>

<text x="1696.700" y="640" textLength="32" class="lb">Merge</text>
<rect x="1739" y="630" width="12" height="12" rx="2" fill="#4772b3"/>
<path d="M1741.500 636L1744 639 1749 632.500" fill="none" stroke="#fff" stroke-width="1.600"/>
<rect x="1759" y="627" width="124" height="18" rx="4" fill="#545454"/>
<text x="1798.300" y="640" textLength="43" class="lb">0.001 m</text>
<use href="#dot" x="1894" y="636"/>

<text x="1648.300" y="662" textLength="81" class="dim">Bisect Distance</text>
<rect x="1739" y="649" width="144" height="18" rx="4" fill="#494949"/>
<text x="1788.300" y="662" textLength="43" class="dim">0.001 m</text>
<circle cx="1894" cy="658" r="1.800" fill="#575757"/>

<path d="M1650 684.500L1654.500 689 1650 693.500" fill="none" stroke="#c8c8c8" stroke-width="1.100"/>
<text x="1661.700" y="693" textLength="23" class="lb">Data</text>

<!-- status bar -->
<g transform="translate(16,1069)"><use href="#mouse"/><path d="M-5-3.500a3.500 3.500 0 0 1 3.500-3.500H0V-1H-5Z" fill="#a6a6a6"/></g>
<text x="25" y="1073" textLength="30" class="st">Select</text>
<g transform="translate(71,1069)"><use href="#mouse"/><rect x="-2" y="-7" width="4" height="8" fill="#a6a6a6"/></g>
<text x="79" y="1073" textLength="62" class="st">Rotate View</text>
<g transform="translate(157,1069)"><use href="#mouse"/><path d="M0-7H1.500A3.500 3.500 0 0 1 5-3.500V-1H0Z" fill="#a6a6a6"/></g>
<text x="165" y="1073" textLength="41" class="st">Options</text>
<text x="1510" y="1073" textLength="52" class="st">Plane.004</text>
<path d="M1567.500 1063V1075M1634 1063V1075M1705 1063V1075M1767 1063V1075M1807 1063V1075M1877 1063V1075" stroke="#8a8a8a"/>
<text x="1573" y="1073" textLength="55" class="st">Verts:2/10</text>
<text x="1639" y="1073" textLength="61" class="st">Edges:1/13</text>
<text x="1710" y="1073" textLength="52" class="st">Faces:0/4</text>
<text x="1772.500" y="1073" textLength="29.500" class="st">Tris:8</text>
<text x="1812" y="1073" textLength="60" class="st">Objects:1/1</text>
<text x="1881" y="1073" textLength="27" class="st">4.5.4</text>
</svg>
</body></html>
